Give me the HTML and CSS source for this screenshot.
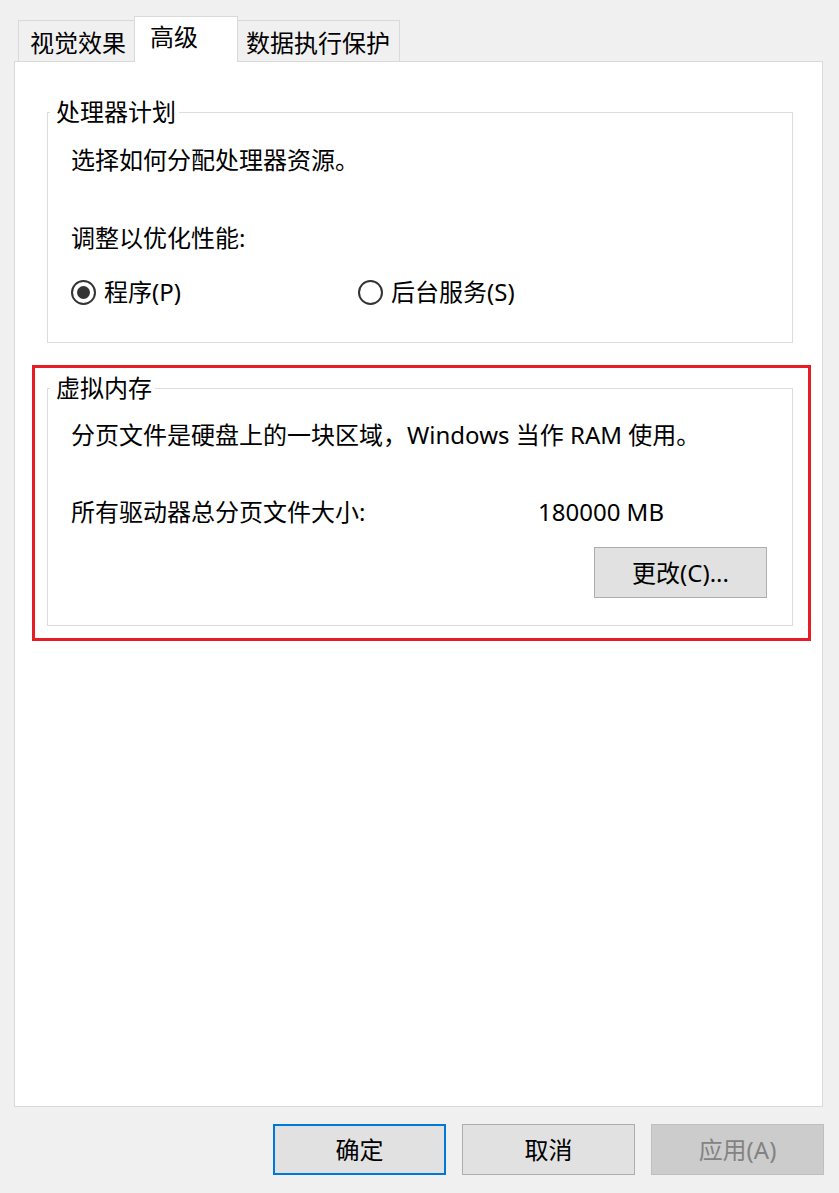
FILE: index.html
```html
<!DOCTYPE html>
<html lang="zh-CN">
<head>
<meta charset="utf-8">
<title>性能选项</title>
<link rel="stylesheet" href="styles.css">
</head>
<body>
<div class="window">
  <div class="tabs">
    <div class="tab tab-first">视觉效果</div>
    <div class="tab tab-active">高级</div>
    <div class="tab tab-last">数据执行保护</div>
  </div>
  <div class="panel">
    <fieldset class="group group-cpu">
      <legend>处理器计划</legend>
      <div class="group-body">
        <p class="line">选择如何分配处理器资源。</p>
        <p class="line line-adjust">调整以优化性能:</p>
        <div class="radios">
          <label class="radio radio-first"><span class="radio-circle checked"></span>程序(P)</label>
          <label class="radio"><span class="radio-circle"></span>后台服务(S)</label>
        </div>
      </div>
    </fieldset>
    <div class="highlight">
      <fieldset class="group group-vm">
        <legend>虚拟内存</legend>
        <div class="group-body">
          <p class="line">分页文件是硬盘上的一块区域，Windows 当作 RAM 使用。</p>
          <div class="size-row"><span class="size-label">所有驱动器总分页文件大小:</span><span class="size-value">180000 MB</span></div>
          <div class="btn-row"><button class="btn">更改(C)...</button></div>
        </div>
      </fieldset>
    </div>
  </div>
  <div class="footer">
    <button class="btn btn-default">确定</button>
    <button class="btn">取消</button>
    <button class="btn btn-disabled">应用(A)</button>
  </div>
</div>
</body>
</html>
```
FILE: styles.css
```css
html, body {
  margin: 0;
  padding: 0;
}
body {
  width: 839px;
  height: 1193px;
  overflow: hidden;
  background: #f0f0f0;
  color: #000;
  font-family: "Noto Sans", "Noto Sans CJK SC", sans-serif;
  font-size: 24px;
}
.window {
  padding-top: 16px;
}
.tabs {
  display: flex;
  align-items: flex-end;
  height: 45px;
  padding-left: 18px;
}
.tab {
  box-sizing: border-box;
  height: 41px;
  border: 1px solid #d9d9d9;
  border-bottom: 0;
  background: #f0f0f0;
  line-height: 28px;
  padding-top: 8px;
  white-space: nowrap;
}
.tab-first {
  width: 116px;
  border-right: 0;
  padding-left: 11px;
}
.tab-active {
  width: 104px;
  height: 46px;
  margin-bottom: -1px;
  background: #fff;
  position: relative;
  z-index: 1;
  padding-top: 6px;
  padding-left: 15px;
}
.tab-last {
  width: 162px;
  border-left: 0;
  padding-left: 8px;
}
.panel {
  box-sizing: border-box;
  height: 1046px;
  margin: 0 16px 0 14px;
  background: #fff;
  border: 1px solid #d9d9d9;
  padding-top: 36px;
}
.group {
  margin: 0;
  padding: 0;
  border: 1px solid #dcdcdc;
  min-inline-size: 0;
}
.group legend {
  margin-left: 2px;
  padding: 0 3px 0 6px;
  line-height: 28px;
}
.group-body {
  padding-left: 23px;
}
.line {
  margin: 0;
  line-height: 28px;
}
.group-cpu {
  margin: 0 29px 0 32px;
  padding-top: 20px;
  padding-bottom: 36px;
}
.line-adjust {
  margin-top: 50px;
}
.radios {
  display: flex;
  margin-top: 26px;
  line-height: 28px;
}
.radio {
  display: flex;
  align-items: center;
  gap: 8px;
}
.radio-first {
  width: 287px;
}
.radio-circle {
  box-sizing: border-box;
  width: 25px;
  height: 25px;
  border: 2px solid #333;
  border-radius: 50%;
  display: flex;
  align-items: center;
  justify-content: center;
}
.radio-circle.checked::after {
  content: "";
  width: 13px;
  height: 13px;
  border-radius: 50%;
  background: #333;
}
.highlight {
  margin: 22px 11px 0 17px;
  border: 3px solid #e81c24;
  padding: 6px 15px 12px 12px;
}
.group-vm {
  padding-top: 19px;
  padding-bottom: 27px;
}
.size-row {
  display: flex;
  margin-top: 49px;
  line-height: 28px;
}
.size-label {
  width: 467px;
}
.btn-row {
  display: flex;
  justify-content: flex-end;
  margin-top: 21px;
  padding-right: 25px;
}
.btn {
  box-sizing: border-box;
  width: 173px;
  height: 51px;
  margin: 0;
  padding: 0;
  background: #e1e1e1;
  border: 1px solid #adadad;
  color: #000;
  font-family: inherit;
  font-size: 24px;
  line-height: 28px;
}
.footer {
  display: flex;
  justify-content: flex-end;
  gap: 16px;
  margin-top: 17px;
  padding-right: 15px;
}
.btn-default {
  border: 2px solid #0078d7;
}
.btn-disabled {
  background: #cccccc;
  border-color: #bfbfbf;
  color: #838383;
}
```
